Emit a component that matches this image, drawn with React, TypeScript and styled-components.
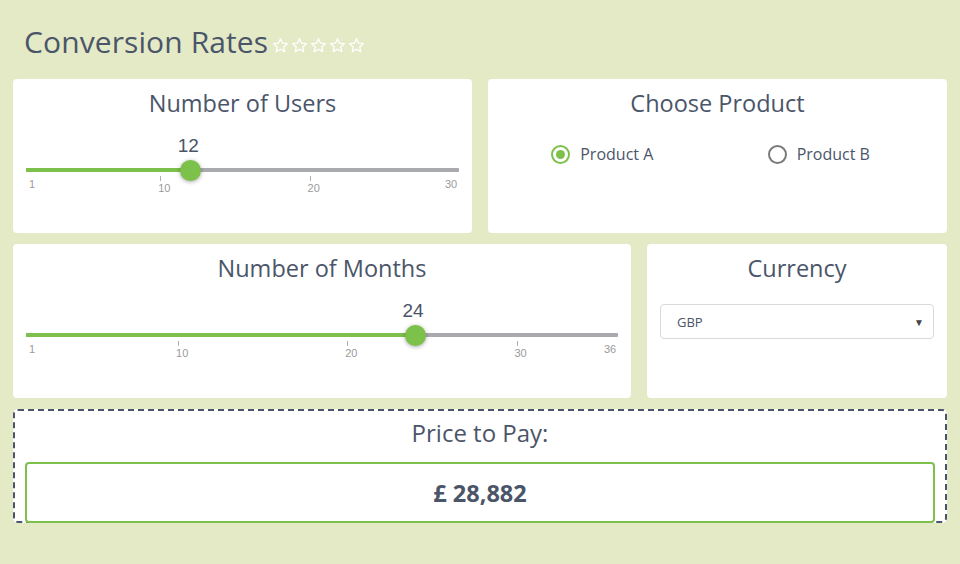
import React from 'react'
import styled, { createGlobalStyle } from 'styled-components'

const GlobalStyle = createGlobalStyle`
  html, body {
    margin: 0;
    padding: 0;
    background: #e4eac6;
  }
  body {
    font-family: "Open Sans", "Noto Sans", sans-serif;
    color: #4b5569;
  }
`;

const Page = styled("div")`
  padding: 0 13px;
  height: 564px;
  box-sizing: border-box;
`;

const Header = styled("div")`
  display: flex;
  align-items: center;
  gap: 4px;
  padding: 16px 0 0 11px;
  height: 68px;
  box-sizing: border-box;

  h1 {
    margin: 0;
    font-size: 30px;
    font-weight: 400;
    line-height: 36px;
    color: #4b5569;
    letter-spacing: 0.1px;
  }
`;

const Stars = styled("div")`
  display: flex;
  gap: 2px;
  margin-top: 6px;
`;

const Row = styled("div")<{ $cols: string }>`
  display: grid;
  grid-template-columns: ${p => p.$cols};
  column-gap: 16px;
  margin-top: 11px;
`;

const Card = styled("div")`
  background: #fff;
  border-radius: 4px;
  padding: 10px 13px 0;
  height: 154px;
  box-sizing: border-box;
`;

const CardTitle = styled("h2")`
  margin: 0;
  font-size: 23.5px;
  font-weight: 400;
  line-height: 28px;
  text-align: center;
  color: #4b5569;
`;

const SliderWrap = styled("div")`
  position: relative;
  margin-top: 19px;
  height: 66px;
`;

const SliderValue = styled("div")`
  position: absolute;
  top: 0;
  transform: translateX(calc(-50% - 2px));
  font-family: "Liberation Sans", Arial, sans-serif;
  font-size: 19px;
  line-height: 20px;
  color: #4b5569;
`;

const Track = styled("div")`
  position: absolute;
  left: 0;
  right: 0;
  top: 32px;
  height: 4px;
  background: #a8aaad;
  border-radius: 1px;
`;

const Fill = styled("div")`
  height: 100%;
  background: #7dc04b;
`;

const Thumb = styled("div")`
  position: absolute;
  top: 24px;
  width: 21px;
  height: 21px;
  margin-left: -10.5px;
  border-radius: 50%;
  background: #7cc14a;
  box-shadow: 0 1px 4px rgba(0, 0, 0, 0.35);
`;

const Tick = styled("div")`
  position: absolute;
  top: 40px;
  width: 1px;
  height: 5px;
  background: #b0b0b0;
`;

const TickLabel = styled("div")<{ $edge?: boolean }>`
  position: absolute;
  top: ${p => (p.$edge ? 42 : 46)}px;
  transform: translateX(-50%);
  font-family: "Liberation Sans", Arial, sans-serif;
  font-size: 11px;
  line-height: 13px;
  color: #9a9a9a;
`;

const RadioRow = styled("div")`
  display: grid;
  grid-template-columns: 1fr 1fr;
  justify-items: center;
  margin-top: 26px;
`;

const RadioLabel = styled("label")`
  display: flex;
  align-items: center;
  gap: 10px;
  font-size: 16px;
  color: #4b5569;
  margin-right: 14px;
`;

const RadioCircle = styled("span")<{ $checked?: boolean }>`
  width: 19px;
  height: 19px;
  box-sizing: border-box;
  border-radius: 50%;
  border: 2px solid ${p => (p.$checked ? '#7cc14a' : '#7a7a7a')};
  display: flex;
  align-items: center;
  justify-content: center;

  &::after {
    content: '';
    width: 9px;
    height: 9px;
    border-radius: 50%;
    background: ${p => (p.$checked ? '#7cc14a' : 'transparent')};
  }
`;

const Select = styled("div")`
  margin-top: 22px;
  height: 35px;
  box-sizing: border-box;
  border: 1px solid #d9d9d9;
  border-radius: 4px;
  display: flex;
  align-items: center;
  justify-content: space-between;
  padding: 0 9px 0 16px;
  font-size: 13px;
  color: #4b5569;

  span:last-child {
    font-size: 10px;
    color: #444;
  }
`;

const PriceBox = styled("div")`
  margin-top: 11px;
  border: 2px dashed #4b5569;
  border-radius: 5px;
  background: #fff;
  padding: 9px 10px 0;
  box-sizing: border-box;
  height: 114px;
  display: flex;
  flex-direction: column;
`;

const PriceTitle = styled("div")`
  text-align: center;
  font-size: 24px;
  line-height: 26px;
  color: #4b5569;
`;

const PriceValue = styled("div")`
  margin-top: 16px;
  margin-bottom: -2px;
  flex: 1;
  border: 2px solid #7dc04b;
  border-radius: 4px;
  display: flex;
  align-items: center;
  justify-content: center;
  font-size: 23.5px;
  font-weight: 700;
  color: #4b5569;
`;

const Star = () => (
  <svg width="17" height="17" viewBox="0 0 24 24">
    <path
      d="M12 2.5l2.9 6.2 6.7.7-5 4.6 1.4 6.7L12 17.3l-6 3.4 1.4-6.7-5-4.6 6.7-.7z"
      fill="none"
      stroke="#fff"
      strokeWidth="1.8"
      strokeLinejoin="round"
    />
  </svg>
);

type SliderProps = {
  min: number
  max: number
  value: number
  ticks: number[]
}

const Slider = ({ min, max, value, ticks }: SliderProps) => {
  const pct = (v: number) => ((v - min) / (max - min)) * 100
  return (
    <SliderWrap>
      <SliderValue style={{ left: `${pct(value)}%` }}>{value}</SliderValue>
      <Track>
        <Fill style={{ width: `${pct(value)}%` }} />
      </Track>
      {ticks.map(t => (
        <Tick key={t} style={{ left: `${pct(t)}%` }} />
      ))}
      <TickLabel $edge style={{ left: '6px' }}>{min}</TickLabel>
      {ticks.map(t => (
        <TickLabel key={t} style={{ left: `calc(${pct(t)}% + 4px)` }}>{t}</TickLabel>
      ))}
      <TickLabel $edge style={{ left: 'calc(100% - 8px)' }}>{max}</TickLabel>
      <Thumb style={{ left: `${pct(value)}%` }} />
    </SliderWrap>
  )
}

const App = () => {
  return (
    <>
      <GlobalStyle />
      <Page>
        <Header>
          <h1>Conversion Rates</h1>
          <Stars>
            {[0, 1, 2, 3, 4].map(i => <Star key={i} />)}
          </Stars>
        </Header>
        <Row $cols="1fr 1fr">
          <Card>
            <CardTitle>Number of Users</CardTitle>
            <Slider min={1} max={30} value={12} ticks={[10, 20]} />
          </Card>
          <Card>
            <CardTitle>Choose Product</CardTitle>
            <RadioRow>
              <RadioLabel>
                <RadioCircle $checked />
                Product A
              </RadioLabel>
              <RadioLabel>
                <RadioCircle />
                Product B
              </RadioLabel>
            </RadioRow>
          </Card>
        </Row>
        <Row $cols="1fr 300px">
          <Card>
            <CardTitle>Number of Months</CardTitle>
            <Slider min={1} max={36} value={24} ticks={[10, 20, 30]} />
          </Card>
          <Card>
            <CardTitle>Currency</CardTitle>
            <Select>
              <span>GBP</span>
              <span>▼</span>
            </Select>
          </Card>
        </Row>
        <PriceBox>
          <PriceTitle>Price to Pay:</PriceTitle>
          <PriceValue>£ 28,882</PriceValue>
        </PriceBox>
      </Page>
    </>
  )
}

export default App
